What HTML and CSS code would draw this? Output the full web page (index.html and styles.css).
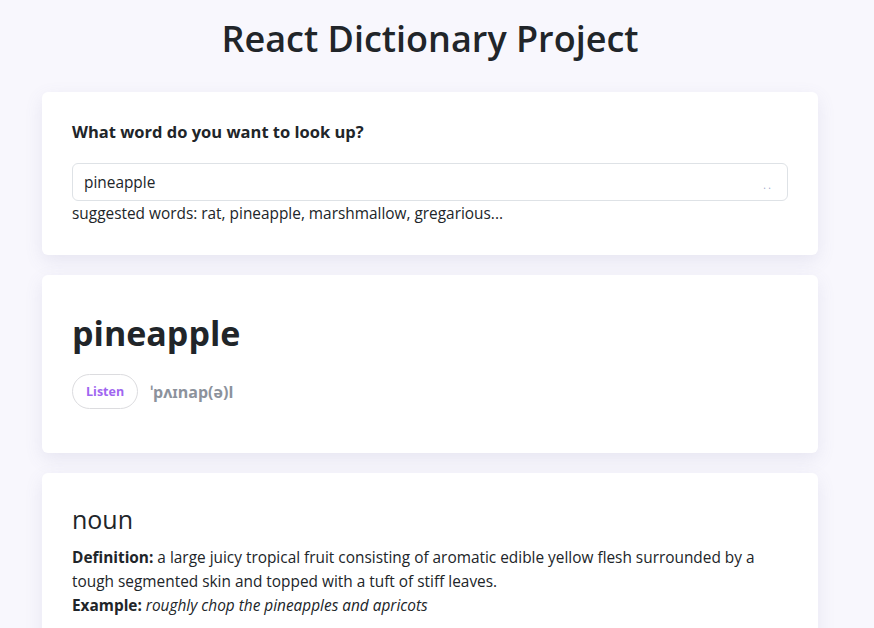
FILE: index.html
```html
<!DOCTYPE html>
<html lang="en">
<head>
<meta charset="utf-8">
<title>React Dictionary Project</title>
<link rel="stylesheet" href="styles.css">
</head>
<body>
<div class="app">
  <h1 class="title">React Dictionary Project</h1>
  <section class="card search-card">
    <h2 class="search-label">What word do you want to look up?</h2>
    <div class="search-field">
      <input class="search-input" type="search" value="pineapple">
      <span class="search-dots">. .</span>
    </div>
    <div class="hint">suggested words: rat, pineapple, marshmallow, gregarious...</div>
  </section>
  <section class="card word-card">
    <h2 class="word">pineapple</h2>
    <div class="phonetic-row">
      <button class="listen">Listen</button>
      <span class="phonetic">ˈpʌɪnap(ə)l</span>
    </div>
  </section>
  <section class="card meaning-card">
    <h3 class="pos">noun</h3>
    <p class="def"><strong>Definition:</strong> a large juicy tropical fruit consisting of aromatic edible yellow flesh surrounded by a tough segmented skin and topped with a tuft of stiff leaves.<br><strong>Example:</strong> <em>roughly chop the pineapples and apricots</em></p>
  </section>
</div>
</body>
</html>
```
FILE: styles.css
```css
* { box-sizing: border-box; }
html, body { margin: 0; padding: 0; }
body {
  background: #f8f7fd;
  color: #212529;
  font-family: "Open Sans", "Noto Sans", sans-serif;
  font-size: 15.4px;
  line-height: 24px;
}
.app {
  width: 776px;
  margin: 0 0 0 42px;
  padding-top: 16px;
}
.title {
  margin: 0 0 30px;
  text-align: center;
  font-size: 36px;
  font-weight: 600;
  line-height: 46px;
}
.card {
  background: #fff;
  border-radius: 6px;
  box-shadow: 0 6px 18px rgba(110, 110, 160, 0.12);
  padding: 30px;
  margin-bottom: 20px;
}
.search-card { padding-top: 28px; padding-bottom: 29px; }
.search-label {
  margin: 0 0 19px;
  font-size: 16.5px;
  font-weight: 700;
  line-height: 24px;
}
.search-field { position: relative; }
.search-input {
  display: block;
  width: 100%;
  height: 38px;
  border: 1px solid #dee2e6;
  border-radius: 6px;
  padding: 0 11px;
  font-family: inherit;
  font-size: 15.4px;
  color: #212529;
  background: #fff;
  outline: none;
  -webkit-appearance: none;
  appearance: none;
}
.search-dots {
  position: absolute;
  right: 17px;
  top: 17px;
  font-size: 10px;
  line-height: 10px;
  color: #9aa6c8;
  letter-spacing: 0;
}
.hint { margin-top: 1px; }
.word-card { padding-top: 36px; padding-bottom: 44px; }
.word {
  margin: 0 0 19px;
  font-size: 34px;
  font-weight: 700;
  line-height: 44px;
}
.phonetic-row { display: flex; align-items: center; gap: 12px; }
.listen {
  height: 35px;
  padding: 0 13px;
  border: 1px solid #dcdcdf;
  border-radius: 18px;
  background: #fff;
  color: #a066f0;
  font-family: inherit;
  font-size: 12.5px;
  font-weight: 700;
}
.phonetic {
  color: #8c929c;
  font-size: 16px;
  font-weight: 700;
}
.meaning-card { padding-top: 29px; }
.pos {
  margin: 0 0 10px;
  font-size: 25px;
  font-weight: 400;
  line-height: 34px;
}
.def { margin: 0; }
.def em { font-style: italic; }
```
